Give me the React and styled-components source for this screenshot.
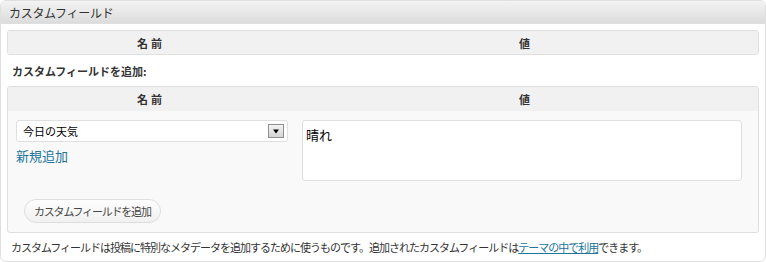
import React from 'react';
import styled, { createGlobalStyle } from 'styled-components';

const Global = createGlobalStyle`
    body {
        margin: 0;
        font-family: "Liberation Sans", "Noto Sans CJK JP", sans-serif;
        color: #333;
        background: #fff;
    }
`;

const JP = '"Noto Sans CJK JP", "Liberation Sans", sans-serif';

const Panel = styled.div`
    width: 766px;
    height: 262px;
    box-sizing: border-box;
    border: 1px solid #dfdfdf;
    border-radius: 6px;
    overflow: hidden;
    display: flex;
    flex-direction: column;
    font-family: ${JP};
`;

const Header = styled.h3`
    margin: 0;
    height: 26px;
    box-sizing: border-box;
    border-bottom: 1px solid #dfdfdf;
    background: linear-gradient(to bottom, #f3f3f3, #dcdcdc);
    padding-left: 8px;
    display: flex;
    align-items: center;
    font-size: 12px;
    font-weight: normal;
    color: #333;
    letter-spacing: -0.3px;
`;

const Inside = styled.div`
    padding: 6px 6px 0 6px;
    display: flex;
    flex-direction: column;
`;

const Table = styled.div`
    border: 1px solid #dfdfdf;
    border-radius: 3px;
    background: #f9f9f9;
    overflow: hidden;
`;

const HeadRow = styled.div`
    display: grid;
    grid-template-columns: 286px 1fr;
    height: 23px;
    background: #f1f1f1;
    border-bottom: ${p => (p.$last ? 'none' : '1px solid #f1f1f1')};
    align-items: center;
    text-align: center;
    font-size: 11px;
    font-weight: bold;
    letter-spacing: 3px;
    color: #333;
`;

const AddTitle = styled.p`
    margin: 0;
    height: 31px;
    padding-left: 5px;
    display: flex;
    align-items: center;
    font-size: 11px;
    font-weight: bold;
    color: #333;
`;

const BodyRow = styled.div`
    display: grid;
    grid-template-columns: 286px 1fr;
    padding-top: 9px;
`;

const KeyCell = styled.div`
    padding: 0 6px 0 8px;
    display: flex;
    flex-direction: column;
`;

const ValueCell = styled.div`
    padding: 0 16px 0 8px;
`;

const Select = styled.div`
    height: 22px;
    box-sizing: border-box;
    border: 1px solid #dfdfdf;
    border-radius: 3px;
    background: #fff;
    display: flex;
    align-items: center;
    justify-content: space-between;
    padding: 0 3px 0 6px;
    font-size: 11px;
    color: #000;
`;

const DropButton = styled.span`
    width: 16px;
    height: 14px;
    box-sizing: border-box;
    border: 1px solid #8f8f8f;
    background: linear-gradient(to bottom, #f4f4f4, #d4d4d4);
    display: flex;
    align-items: center;
    justify-content: center;
`;

const NewLink = styled.a`
    margin-top: 6px;
    font-size: 13px;
    color: #21759b;
    text-decoration: none;
    line-height: 16px;
`;

const TextArea = styled.textarea`
    display: block;
    width: 100%;
    height: 61px;
    box-sizing: border-box;
    border: 1px solid #dfdfdf;
    border-radius: 3px;
    background: #fff;
    resize: none;
    padding: 4px 3px;
    font-family: ${JP};
    font-size: 13px;
    color: #000;
    outline: none;
`;

const ButtonRow = styled.div`
    padding: 16px 0 9px 16px;
`;

const PillButton = styled.button`
    height: 24px;
    padding: 0 9px;
    border: 1px solid #dedede;
    border-radius: 12px;
    background: linear-gradient(to bottom, #fefefe, #f0f0f0);
    font-family: ${JP};
    font-size: 11px;
    color: #464646;
    letter-spacing: -1.2px;
`;

const Note = styled.p`
    margin: 0;
    height: 28px;
    padding-left: 4px;
    display: flex;
    align-items: center;
    font-size: 11px;
    letter-spacing: -1px;
    color: #333;
    white-space: nowrap;

    a {
        color: #21759b;
        text-decoration: underline;
    }
`;

const Arrow = () => (
    <svg width="8" height="5" viewBox="0 0 8 5">
        <path d="M1 0.5 H7 L4 4.5 Z" fill="#000" />
    </svg>
);

const App = () => {
    return (
        <>
            <Global />
            <Panel>
                <Header>カスタムフィールド</Header>
                <Inside>
                    <Table>
                        <HeadRow $last>
                            <span>名前</span>
                            <span>値</span>
                        </HeadRow>
                    </Table>
                    <AddTitle>カスタムフィールドを追加:</AddTitle>
                    <Table>
                        <HeadRow>
                            <span>名前</span>
                            <span>値</span>
                        </HeadRow>
                        <BodyRow>
                            <KeyCell>
                                <Select>
                                    <span>今日の天気</span>
                                    <DropButton><Arrow /></DropButton>
                                </Select>
                                <NewLink href="#">新規追加</NewLink>
                            </KeyCell>
                            <ValueCell>
                                <TextArea defaultValue="晴れ" readOnly />
                            </ValueCell>
                        </BodyRow>
                        <ButtonRow>
                            <PillButton>カスタムフィールドを追加</PillButton>
                        </ButtonRow>
                    </Table>
                    <Note>
                        カスタムフィールドは投稿に特別なメタデータを追加するために使うものです。追加されたカスタムフィールドは<a href="#">テーマの中で利用</a>できます。
                    </Note>
                </Inside>
            </Panel>
        </>
    );
};

export default App;
